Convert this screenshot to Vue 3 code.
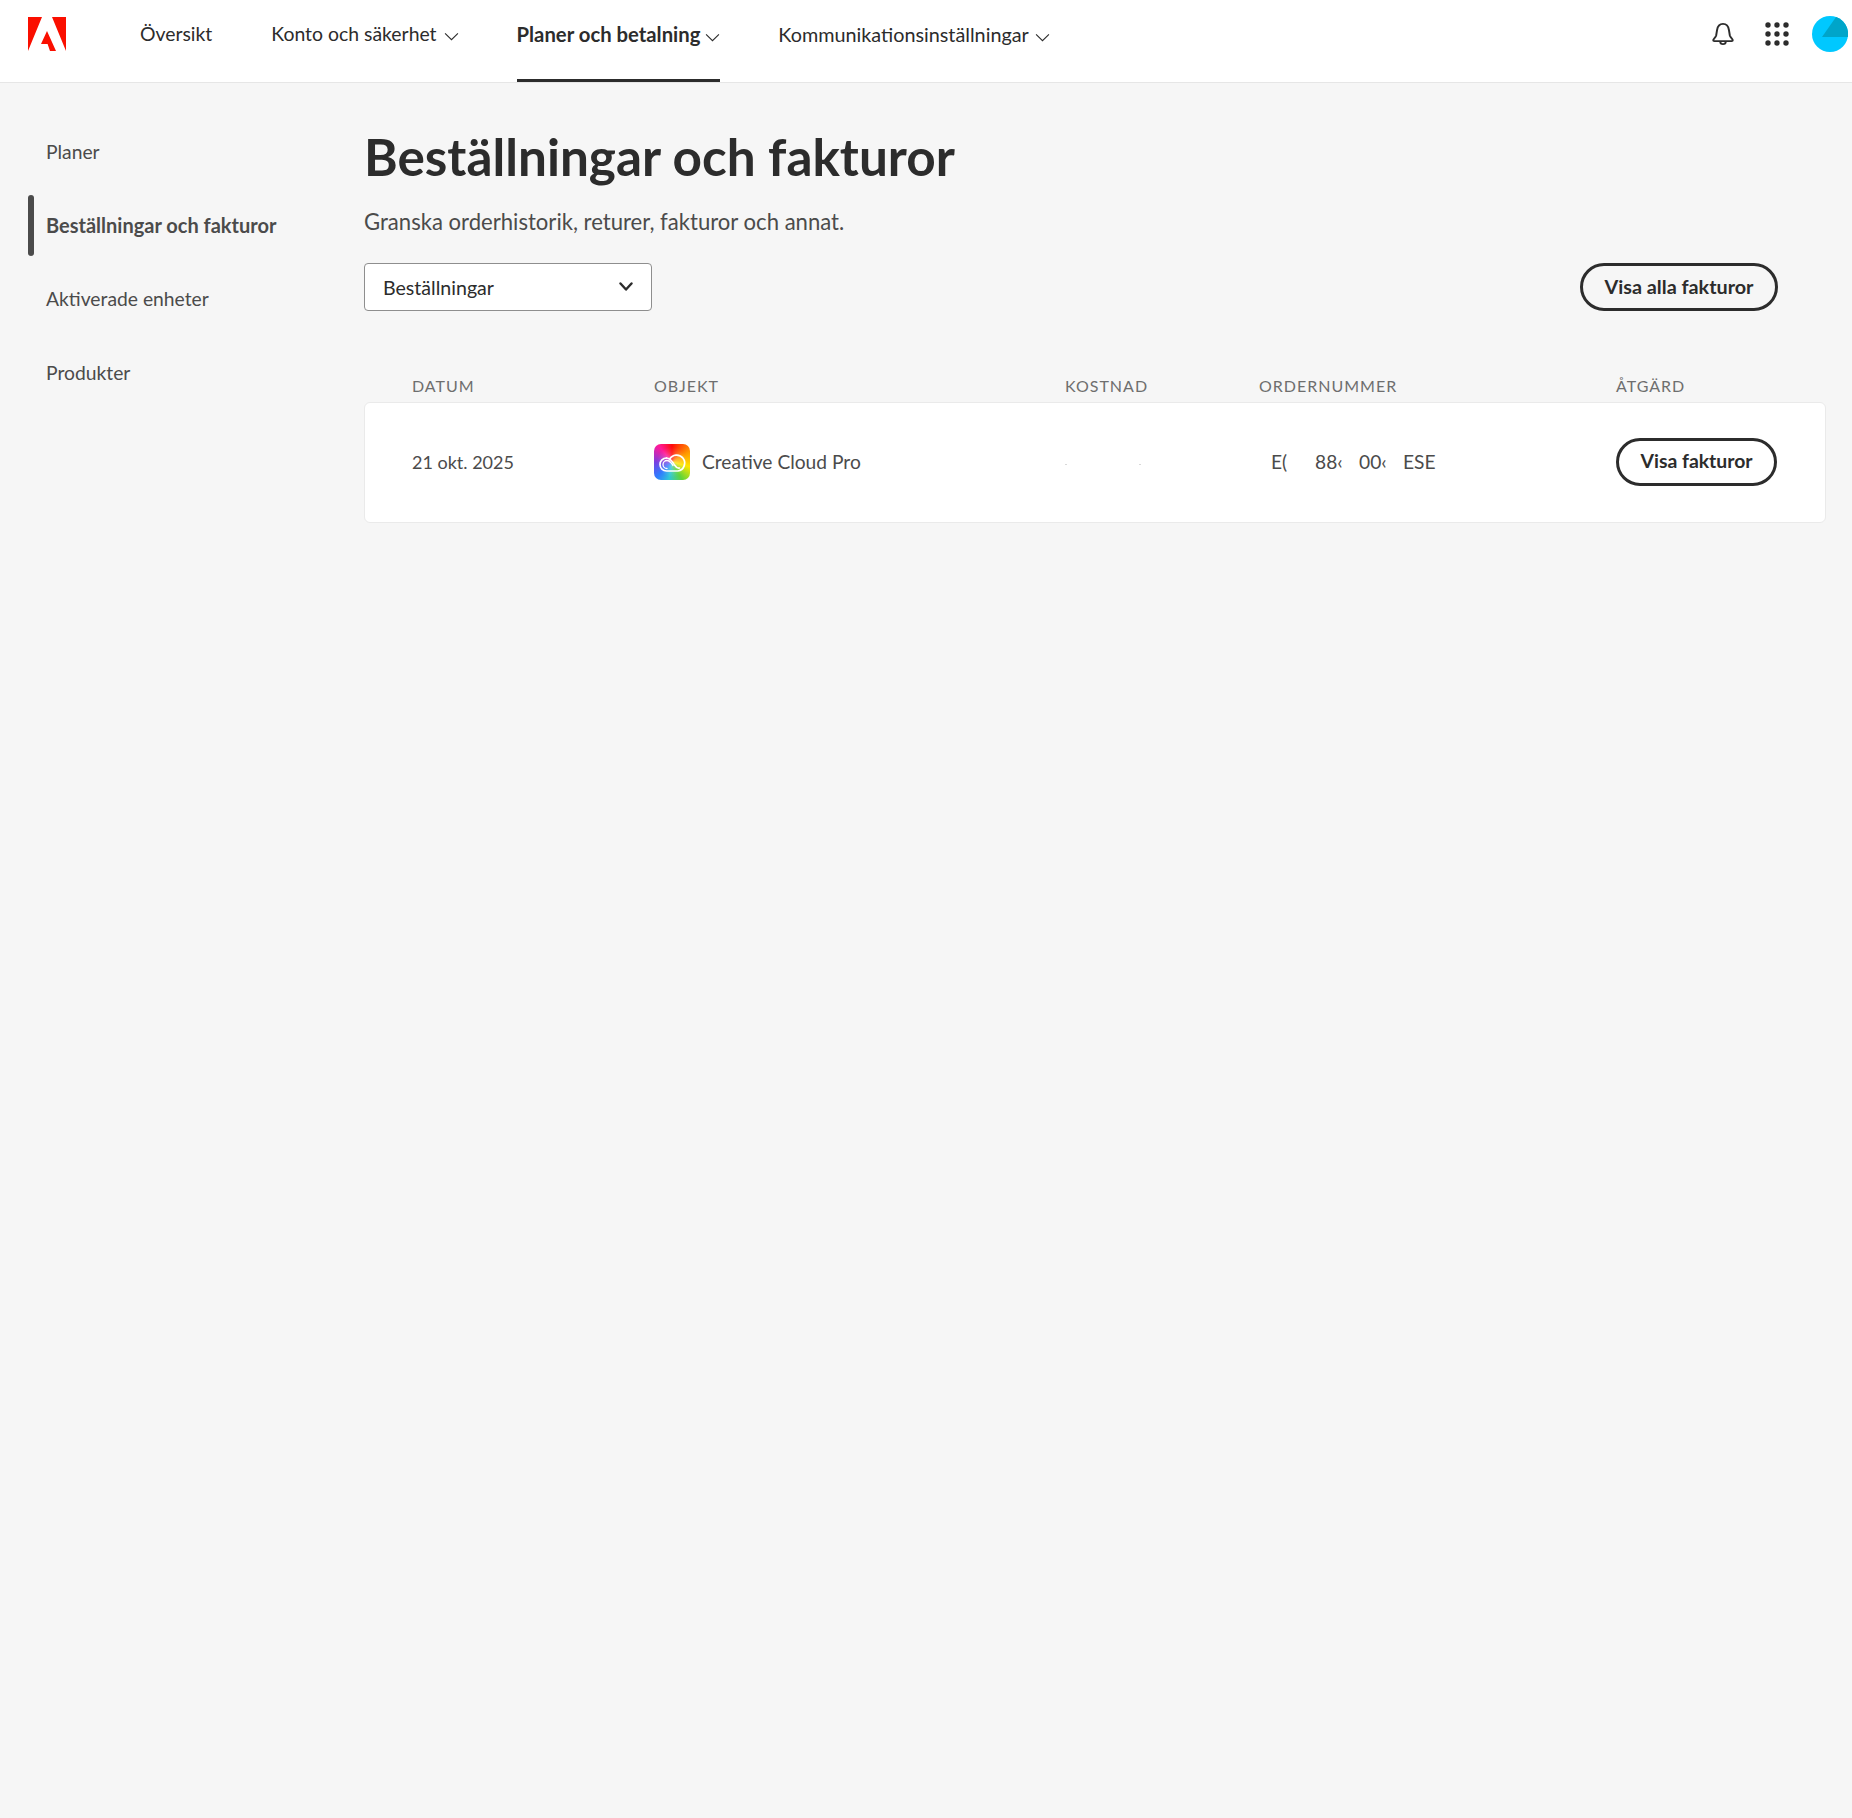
<script setup>
const navItems = [
  { label: 'Översikt', caret: false },
  { label: 'Konto och säkerhet', caret: true },
  { label: 'Planer och betalning', caret: true, active: true },
  { label: 'Kommunikationsinställningar', caret: true }
]
const sideItems = [
  { label: 'Planer' },
  { label: 'Beställningar och fakturor', active: true },
  { label: 'Aktiverade enheter' },
  { label: 'Produkter' }
]
const dots = [3, 12, 21]
const orderParts = ['E(', '88‹', '00‹', 'ESE']
</script>

<template>
  <div class="page">
    <header class="topbar">
      <svg class="logo" viewBox="0 0 38 34" width="38" height="34">
        <path fill="#fa0f00" d="M0 0h14L0 34zM24 0h14v34zM19 14l9 20h-6l-2.400-7h-6.600z" />
      </svg>
      <nav class="nav">
        <a v-for="item in navItems" :key="item.label" class="nav-item" :class="{ active: item.active }">
          {{ item.label }}
          <svg v-if="item.caret" class="caret" viewBox="0 0 14 8" width="15" height="9">
            <path d="M1 1l6 6 6-6" fill="none" stroke="#2c2c2c" stroke-width="1" />
          </svg>
        </a>
      </nav>
      <div class="tools">
        <svg class="bell" viewBox="0 0 24 26" width="26" height="25" preserveAspectRatio="none">
          <path d="M3 20c0-1 2-2.500 2.700-5l.8-5.500C7 5.500 9 3 12 3s5 2.500 5.500 6.500l.8 5.500c.7 2.500 2.700 4 2.700 5 0 .6-.4 1-1 1H4c-.6 0-1-.4-1-1z" fill="none" stroke="#2c2c2c" stroke-width="1.800" stroke-linejoin="round" />
          <path d="M9.500 21.500a2.500 2.500 0 0 0 5 0" fill="none" stroke="#2c2c2c" stroke-width="1.800" />
        </svg>
        <svg class="apps" viewBox="0 0 24 24" width="24" height="24">
          <template v-for="y in dots" :key="y">
            <circle v-for="x in dots" :key="x" :cx="x" :cy="y" r="2.700" fill="#2c2c2c" />
          </template>
        </svg>
        <svg class="avatar" viewBox="0 0 36 36" width="36" height="36">
          <circle cx="18" cy="18" r="18" fill="#00c8ff" />
          <path d="M10 21 24 1a18 18 0 0 1 11.900 20z" fill="#00a5c9" />
        </svg>
      </div>
    </header>

    <div class="body">
      <aside class="side">
        <a v-for="item in sideItems" :key="item.label" class="side-item" :class="{ active: item.active }">
          {{ item.label }}
        </a>
      </aside>

      <main class="main">
        <h1 class="title">Beställningar och fakturor</h1>
        <p class="sub">Granska orderhistorik, returer, fakturor och annat.</p>

        <div class="controls">
          <div class="select">
            <span>Beställningar</span>
            <svg viewBox="0 0 14 10" width="14" height="10">
              <path d="M1.500 1.500 7 7.500l5.500-6" fill="none" stroke="#2c2c2c" stroke-width="2.400" stroke-linecap="round" stroke-linejoin="round" />
            </svg>
          </div>
          <button class="pill">Visa alla fakturor</button>
        </div>

        <div class="cols heads">
          <span>DATUM</span>
          <span>OBJEKT</span>
          <span>KOSTNAD</span>
          <span>ORDERNUMMER</span>
          <span>ÅTGÄRD</span>
        </div>

        <div class="cols card">
          <span class="date">21 okt. 2025</span>
          <span class="product">
            <span class="cc">
              <svg viewBox="0 0 36 36" width="36" height="36">
                <path d="M12.500 14a6.500 6.500 0 0 0 0 13H24a8 8 0 1 0-8.500-11.500" fill="none" stroke="#fff" stroke-width="1.700" stroke-linecap="round" />
                <path d="M12.500 14c4 0 6 4 8 7s3 3.500 5 3" fill="none" stroke="#fff" stroke-width="1.700" stroke-linecap="round" />
                <path d="M13 24.500a4 4 0 0 1 0-8c3 0 4.500 3 6 5" fill="none" stroke="#fff" stroke-width="1.300" stroke-linecap="round" />
              </svg>
            </span>
            Creative Cloud Pro
          </span>
          <span class="cost"><i></i><i></i></span>
          <span class="order">
            <span v-for="part in orderParts" :key="part" class="frag">{{ part }}</span>
          </span>
          <span><button class="pill small">Visa fakturor</button></span>
        </div>
      </main>
    </div>
  </div>
</template>

<style scoped>
.page {
  min-height: 100vh;
  background: #f6f6f6;
  font-family: Lato, "Open Sans", sans-serif;
  color: #2c2c2c;
}

.topbar {
  height: 82px;
  background: #fff;
  border-bottom: 1px solid #e6e6e6;
  display: flex;
  padding: 0 4px 0 28px;
}

.logo {
  margin-top: 17px;
  flex: none;
}

.nav {
  display: flex;
  gap: 59px;
  margin-left: 74px;
}

.nav-item {
  height: 82px;
  box-sizing: border-box;
  padding-top: 21px;
  font-size: 19.4px;
  line-height: 26px;
  white-space: nowrap;
  border-bottom: 3px solid transparent;
}

.nav-item.active {
  margin-left: -1px;
  font-size: 20.3px;
  font-weight: 700;
  border-bottom-color: #2c2c2c;
}

.nav-item:last-child {
  margin-left: -1px;
  font-size: 19.8px;
}

.caret {
  margin-left: 2px;
}

.active .caret {
  margin-left: 0;
}

.tools {
  margin-left: auto;
  display: flex;
  gap: 24px;
  padding-top: 16px;
}

.bell {
  margin-top: 5px;
}

.apps {
  margin: 6px -1px 0 5px;
}

.body {
  display: flex;
}

.side {
  width: 364px;
  flex: none;
  box-sizing: border-box;
  padding: 38px 0 0 28px;
  display: flex;
  flex-direction: column;
  gap: 12.5px;
}

.side-item {
  height: 61px;
  display: flex;
  align-items: center;
  padding-left: 18px;
  font-size: 19.3px;
  color: #4b4b4b;
  position: relative;
}

.side-item.active {
  font-size: 20px;
  font-weight: 700;
}

.side-item.active::before {
  content: "";
  position: absolute;
  left: 0;
  top: 0;
  width: 6px;
  height: 61px;
  border-radius: 3px;
  background: #4b4b4b;
}

.main {
  flex: 1;
  padding-right: 26px;
}

.title {
  margin: 40px 0 0;
  font-size: 51.3px;
  line-height: 66px;
  font-weight: 700;
}

.sub {
  margin: 18px 0 0;
  font-size: 22.1px;
  line-height: 30px;
  color: #4b4b4b;
}

.controls {
  margin-top: 26px;
  display: flex;
  justify-content: space-between;
  padding-right: 48px;
}

.select {
  width: 288px;
  height: 48px;
  box-sizing: border-box;
  background: #fff;
  border: 1px solid #8e8e8e;
  border-radius: 4px;
  padding: 0 18px 0 18px;
  display: flex;
  align-items: center;
  justify-content: space-between;
  font-size: 19.6px;
}

.pill {
  height: 48px;
  box-sizing: border-box;
  border: 3px solid #2c2c2c;
  border-radius: 24px;
  background: transparent;
  padding: 0 21.500px 3px;
  font: 700 19.8px Lato, sans-serif;
  color: #2c2c2c;
}

.pill.small {
  font-size: 19.4px;
}

.cols {
  display: grid;
  grid-template-columns: 242px 411px 194px 357px 1fr;
}

.heads {
  margin: 60px 0 3px;
  padding-left: 48px;
  height: 28px;
  align-items: center;
  font-size: 16px;
  letter-spacing: 1px;
  color: #6e6e6e;
}

.card {
  height: 121px;
  box-sizing: border-box;
  align-items: center;
  padding: 0 0 2px 47px;
  background: #fff;
  border: 1px solid #eaeaea;
  border-radius: 6px;
  font-size: 19.2px;
  color: #4b4b4b;
}

.date {
  font-size: 18px;
}

.product {
  display: flex;
  align-items: center;
  gap: 12px;
}

.cc {
  width: 36px;
  height: 36px;
  border-radius: 7px;
  background:
    radial-gradient(circle at center, rgba(255, 255, 255, .3), rgba(255, 255, 255, 0) 60%),
    conic-gradient(from 0deg, #ff0a0a, #ff9a00 60deg, #ffe600 105deg, #5fd43a 150deg, #2fc7d8 190deg, #2f7cff 225deg, #7a3ee0 270deg, #ff1a9a 320deg, #ff0a0a);
}

.cost {
  display: flex;
  gap: 72px;
  margin-top: 6px;
}

.cost i {
  width: 2px;
  height: 1px;
  background: #d8d8d8;
}

.order {
  display: flex;
  padding-left: 12px;
}

.frag {
  width: 44px;
  white-space: nowrap;
}
</style>

<style>
body { background: #f6f6f6; }
</style>
